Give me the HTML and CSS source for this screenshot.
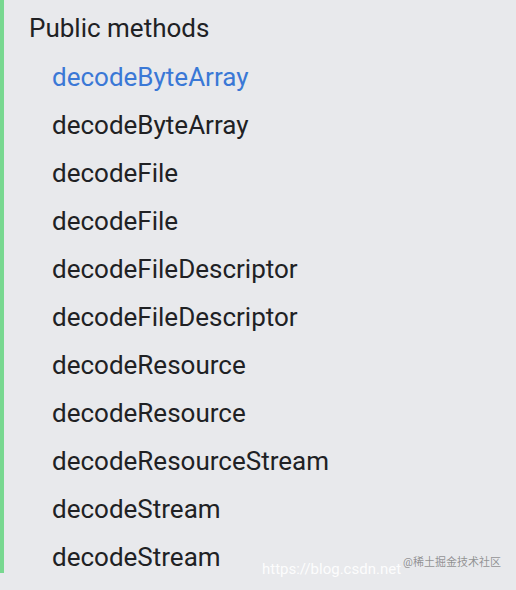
FILE: index.html
```html
<!DOCTYPE html>
<html>
<head>
<meta charset="utf-8">
<link rel="stylesheet" href="styles.css">
</head>
<body>
<div class="page">
  <nav class="toc">
    <div class="heading">Public methods</div>
    <ul class="items">
      <li class="item active">decodeByteArray</li>
      <li class="item">decodeByteArray</li>
      <li class="item">decodeFile</li>
      <li class="item">decodeFile</li>
      <li class="item">decodeFileDescriptor</li>
      <li class="item">decodeFileDescriptor</li>
      <li class="item">decodeResource</li>
      <li class="item">decodeResource</li>
      <li class="item">decodeResourceStream</li>
      <li class="item">decodeStream</li>
      <li class="item">decodeStream</li>
    </ul>
  </nav>
  <div class="watermark"><span class="wm-url">https://blog.csdn.net</span><span class="wm-tag">@稀土掘金技术社区</span></div>
</div>
</body>
</html>
```
FILE: styles.css
```css
html, body {
  margin: 0;
  padding: 0;
  background: #e8e9ec;
}
.page {
  position: relative;
  width: 516px;
  height: 590px;
  overflow: hidden;
  font-family: Roboto, "Noto Sans CJK SC", sans-serif;
}
.toc {
  border-left: 4px solid #78d890;
  height: 573px;
  box-sizing: border-box;
  padding-top: 10px;
}
.heading {
  padding-left: 25px;
  font-size: 26px;
  line-height: 36px;
  margin-bottom: 7px;
  color: #202124;
}
.items {
  list-style: none;
  margin: 0;
  padding: 0 0 0 48px;
}
.item {
  font-size: 26px;
  line-height: 48px;
  color: #202124;
}
.item.active {
  color: #3a78d6;
}
.watermark {
  position: absolute;
  left: 262px;
  top: 559px;
  display: flex;
  align-items: flex-start;
  white-space: nowrap;
}
.wm-url {
  color: rgba(255,255,255,0.9);
  font-size: 15px;
  line-height: 20px;
  width: 141px;
}
.wm-tag {
  margin-top: -4px;
  font-size: 11px;
  line-height: 16px;
  color: rgba(70,70,70,0.55);
}
```
